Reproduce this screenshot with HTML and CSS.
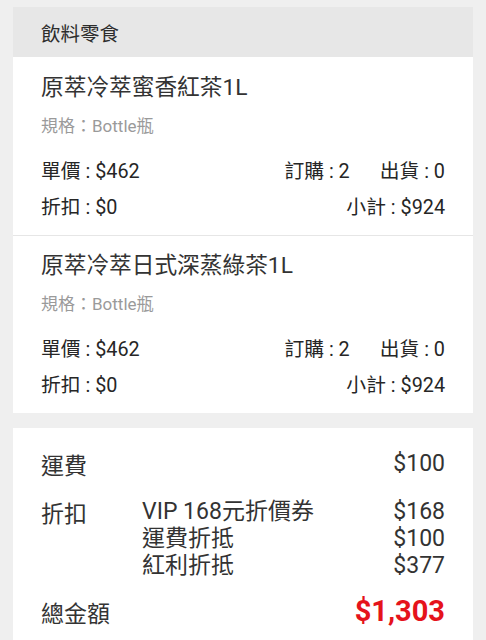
FILE: index.html
```html
<!DOCTYPE html>
<html lang="zh-Hant">
<head>
<meta charset="utf-8">
<link rel="stylesheet" href="styles.css">
</head>
<body>
<div class="page">
  <section class="card">
    <div class="cat">飲料零食</div>
    <div class="item">
      <div class="title">原萃冷萃蜜香紅茶1L</div>
      <div class="spec">規格：Bottle瓶</div>
      <div class="row first">
        <span>單價 : $462</span>
        <span class="pair"><span>訂購 : 2</span><span>出貨 : 0</span></span>
      </div>
      <div class="row">
        <span>折扣 : $0</span>
        <span>小計 : $924</span>
      </div>
    </div>
    <div class="item sep">
      <div class="title">原萃冷萃日式深蒸綠茶1L</div>
      <div class="spec">規格：Bottle瓶</div>
      <div class="row first">
        <span>單價 : $462</span>
        <span class="pair"><span>訂購 : 2</span><span>出貨 : 0</span></span>
      </div>
      <div class="row">
        <span>折扣 : $0</span>
        <span>小計 : $924</span>
      </div>
    </div>
  </section>
  <section class="card summary">
    <div class="srow">
      <div class="label">運費</div>
      <div class="lines"><div class="line"><span></span><span>$100</span></div></div>
    </div>
    <div class="srow">
      <div class="label">折扣</div>
      <div class="lines">
        <div class="line"><span>VIP 168元折價券</span><span>$168</span></div>
        <div class="line"><span>運費折抵</span><span>$100</span></div>
        <div class="line"><span>紅利折抵</span><span>$377</span></div>
      </div>
    </div>
    <div class="srow total">
      <div class="label">總金額</div>
      <div class="amount">$1,303</div>
    </div>
  </section>
</div>
</body>
</html>
```
FILE: styles.css
```css
* { box-sizing: border-box; }
html, body { margin: 0; padding: 0; }
body {
  background: #efefef;
  font-family: "Roboto", "Noto Sans CJK TC", sans-serif;
  color: #333333;
  width: 486px;
  height: 640px;
  overflow: hidden;
}
.page {
  padding: 7px 13px 0 13px;
  display: flex;
  flex-direction: column;
  gap: 15px;
}
.card { background: #ffffff; }
.cat {
  background: #e7e7e7;
  height: 50px;
  padding: 0 28px;
  display: flex;
  align-items: center;
  font-size: 19.5px;
  color: #2c2c2c;
}
.item {
  padding: 16px 28px 12px 28px;
}
.item.sep { border-top: 1px solid #e6e6e6; padding-top: 15px; }
.title {
  font-size: 22.7px;
  line-height: 30px;
  color: #333;
}
.spec {
  margin-top: 12px;
  font-size: 17px;
  line-height: 22px;
  color: #9a9a9a;
}
.row {
  display: flex;
  justify-content: space-between;
  font-size: 19.8px;
  line-height: 30px;
  margin-top: 6px;
  color: #262626;
}
.row.first { margin-top: 20px; }
.pair { display: flex; gap: 30px; }
.summary {
  padding: 22px 28px 16px 28px;
  font-size: 23px;
  color: #333;
}
.srow {
  display: flex;
  align-items: flex-start;
  margin-bottom: 17px;
}
.label {
  width: 101px;
  flex: none;
  line-height: 28px;
  padding-top: 3px;
}
.lines { flex: 1; }
.line {
  display: flex;
  justify-content: space-between;
  line-height: 27px;
}
.total .label { padding-top: 5px; }
.total .amount {
  margin-left: auto;
  color: #e5131b;
  font-weight: bold;
  font-size: 29px;
  line-height: 30px;
}
```
